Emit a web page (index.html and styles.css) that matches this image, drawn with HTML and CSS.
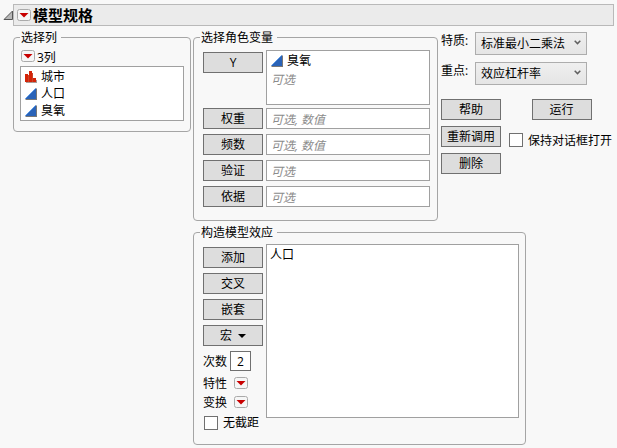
FILE: index.html
```html
<!DOCTYPE html>
<html lang="zh-CN">
<head>
<meta charset="utf-8">
<title>模型规格</title>
<link rel="stylesheet" href="styles.css">
</head>
<body>
<svg class="defs" aria-hidden="true">
  <symbol id="continuous" viewBox="0 0 12 12">
    <path d="M0 12L12 0V12Z" fill="#777"/>
    <path d="M0 11L11 0V11Z" fill="#2a63b8"/>
    <path d="M0.5 10.5L10.5 0.5" stroke="#5d9be8" fill="none"/>
  </symbol>
  <symbol id="nominal" viewBox="0 0 12 12">
    <path d="M1 11H12V12H1ZM11 9H12V12H11Z" fill="#a89a96"/>
    <path d="M0 3H3V11H0ZM4 0H7V11H4ZM8 7H11V11H8Z" fill="#d42408"/>
    <path d="M3 4H4V11H3ZM7 2H8V11H7Z" fill="#c8452c"/>
  </symbol>
  <symbol id="red-triangle" viewBox="0 0 14 12">
    <rect x="0.5" y="0.5" width="13" height="11" rx="2" fill="#f6f6f6" stroke="#aaa"/>
    <path d="M2.5 4H11.5L7 8.5Z" fill="#c80000"/>
  </symbol>
  <symbol id="chevron" viewBox="0 0 7 5">
    <path d="M0.7 0.8L3.5 3.6L6.3 0.8" fill="none" stroke="#606060" stroke-width="1.5"/>
  </symbol>
</svg>

<main class="window">
  <header class="outline">
    <button class="icon-button" aria-label="折叠">
      <svg class="disclosure" viewBox="0 0 10 10"><path d="M1 9.5L9.5 1V9.5Z" fill="#b8b8b8" stroke="#555"/></svg>
    </button>
    <div class="title-bar">
      <button class="icon-button" aria-label="模型规格菜单"><svg class="menu-icon"><use href="#red-triangle"/></svg></button>
      <h1>模型规格</h1>
    </div>
  </header>

  <div class="panels">
    <fieldset class="columns">
      <legend>选择列</legend>
      <div class="count">
        <button class="icon-button" aria-label="列菜单"><svg class="menu-icon"><use href="#red-triangle"/></svg></button>
        <span>3列</span>
      </div>
      <ul class="box">
        <li><svg class="type"><use href="#nominal"/></svg>城市</li>
        <li><svg class="type"><use href="#continuous"/></svg>人口</li>
        <li><svg class="type"><use href="#continuous"/></svg>臭氧</li>
      </ul>
    </fieldset>

    <fieldset class="roles">
      <legend>选择角色变量</legend>
      <div class="role response">
        <button class="push">Y</button>
        <ul class="box">
          <li><svg class="type"><use href="#continuous"/></svg>臭氧</li>
          <li class="hint">可选</li>
        </ul>
      </div>
      <div class="role"><button class="push">权重</button><div class="box hint">可选, 数值</div></div>
      <div class="role"><button class="push">频数</button><div class="box hint">可选, 数值</div></div>
      <div class="role"><button class="push">验证</button><div class="box hint">可选</div></div>
      <div class="role"><button class="push">依据</button><div class="box hint">可选</div></div>
    </fieldset>

    <section class="settings">
      <div class="choice">
        <label for="personality">特质:</label>
        <div class="picker">
          <select id="personality"><option>标准最小二乘法</option></select>
          <svg class="chevron"><use href="#chevron"/></svg>
        </div>
      </div>
      <div class="choice">
        <label for="emphasis">重点:</label>
        <div class="picker">
          <select id="emphasis"><option>效应杠杆率</option></select>
          <svg class="chevron"><use href="#chevron"/></svg>
        </div>
      </div>
      <div class="actions">
        <button class="push">帮助</button>
        <button class="push run">运行</button>
        <button class="push">重新调用</button>
        <label class="check"><input type="checkbox">保持对话框打开</label>
        <button class="push">删除</button>
      </div>
    </section>

    <fieldset class="effects">
      <legend>构造模型效应</legend>
      <div class="effects-body">
        <div class="tools">
          <button class="push">添加</button>
          <button class="push">交叉</button>
          <button class="push">嵌套</button>
          <button class="push">宏 <svg class="caret" viewBox="0 0 8 4"><path d="M0 0H8L4 4Z"/></svg></button>
          <div class="field"><label for="degree">次数</label><input id="degree" class="degree" type="text" value="2"></div>
          <div class="option"><span>特性</span><button class="icon-button" aria-label="特性"><svg class="menu-icon"><use href="#red-triangle"/></svg></button></div>
          <div class="option"><span>变换</span><button class="icon-button" aria-label="变换"><svg class="menu-icon"><use href="#red-triangle"/></svg></button></div>
          <label class="check"><input type="checkbox">无截距</label>
        </div>
        <ul class="box"><li>人口</li></ul>
      </div>
    </fieldset>
  </div>
</main>
</body>
</html>
```
FILE: styles.css
```css
* {
  box-sizing: border-box;
}

body {
  margin: 0;
  background: #f8f8f8;
  color: #000;
  font: 12px/17px "Open Sans", "Noto Sans CJK SC", sans-serif;
}

button,
input,
select {
  margin: 0;
  color: inherit;
  font: inherit;
}

svg {
  display: block;
  flex: none;
}

ul {
  margin: 0;
  padding: 0;
  list-style: none;
}

.defs {
  position: absolute;
  width: 0;
  height: 0;
}

.window {
  padding: 4px 3px;
}

.icon-button {
  display: block;
  padding: 0;
  border: 0;
  background: none;
}

.menu-icon {
  width: 14px;
  height: 12px;
}

.outline {
  display: flex;
  align-items: center;
}

.disclosure {
  width: 10px;
  height: 10px;
}

.title-bar {
  display: flex;
  flex: 1;
  align-items: center;
  gap: 2px;
  height: 22px;
  padding-left: 3px;
  border: 1px solid #b9b9b9;
  background: #ebebeb;
}

h1 {
  margin: 0;
  font-size: 15px;
  line-height: 20px;
}

.panels {
  display: grid;
  grid-template-columns: 178fr 245fr 174fr;
  align-items: start;
  gap: 3px 2px;
  margin-top: 3px;
  padding-left: 10px;
}

fieldset {
  min-width: 0;
  margin: 0;
  padding: 0 6px 13px;
  border: 1px solid #a5a5a5;
  border-radius: 4px;
}

legend {
  padding: 0 4px 0 1px;
}

.box {
  padding: 1px 4px;
  border: 1px solid #a0a0a0;
  background: #fff;
}

.box li {
  display: flex;
  align-items: center;
  gap: 4px;
}

.type {
  width: 12px;
  height: 12px;
}

.hint {
  color: #8c8c8c;
  font-style: italic;
}

.columns {
  padding-bottom: 10px;
}

.count {
  display: flex;
  align-items: center;
  gap: 2px;
  height: 20px;
  padding-left: 1px;
}

.count span {
  padding-top: 3px;
}

.push {
  display: flex;
  align-items: center;
  justify-content: center;
  gap: 6px;
  width: 60px;
  height: 21px;
  padding: 0;
  border: 1px solid #707070;
  background: #ddd;
  white-space: nowrap;
}

.role {
  display: grid;
  grid-template-columns: 60px 1fr;
  gap: 3px;
  margin-top: 5px;
  padding: 0 1px 0 3px;
}

.role .box {
  height: 21px;
}

.role .hint {
  padding-top: 2px;
}

.response {
  margin-top: 4px;
}

.response + .role {
  margin-top: 3px;
}

.role.response .box {
  height: 55px;
}

.response .push {
  margin-top: 2px;
}

.settings {
  padding: 3px 0 0 1px;
}

.choice {
  display: grid;
  grid-template-columns: 34px 112px;
  margin-bottom: 7px;
}

.picker {
  position: relative;
}

select {
  display: block;
  width: 100%;
  height: 23px;
  padding: 0 5px;
  border: 1px solid #adadad;
  border-radius: 0;
  background: linear-gradient(#efefef, #e5e5e5);
  appearance: none;
}

.chevron {
  position: absolute;
  top: 8px;
  right: 6px;
  width: 7px;
  height: 5px;
  pointer-events: none;
}

.actions {
  display: grid;
  grid-template-columns: 60px 1fr;
  align-items: center;
  gap: 6px 8px;
  margin-top: 14px;
}

.run {
  justify-self: center;
}

.check {
  display: flex;
  align-items: center;
  gap: 5px;
  white-space: nowrap;
}

.actions .check {
  align-self: end;
  height: 14px;
}

.check input {
  width: 14px;
  height: 14px;
  border: 1px solid #707070;
  background: #fff;
  appearance: none;
}

.effects {
  grid-column: 2 / 4;
  width: 79%;
}

.effects-body {
  display: grid;
  grid-template-columns: 60px 1fr;
  gap: 3px;
  padding: 3px 0 0 3px;
}

.effects-body .box {
  height: 174px;
  padding: 1px 3px;
}

.tools {
  display: flex;
  flex-direction: column;
  gap: 5px;
  padding-top: 3px;
}

.tools .check {
  padding-left: 1px;
}

.caret {
  width: 8px;
  height: 4px;
}

.field,
.option {
  display: flex;
  align-items: center;
  white-space: nowrap;
}

.field {
  gap: 3px;
}

.option {
  gap: 7px;
  height: 14px;
}

.degree {
  width: 21px;
  height: 20px;
  padding: 0;
  border: 1px solid #707070;
  background: #fff;
  text-align: center;
}
```
